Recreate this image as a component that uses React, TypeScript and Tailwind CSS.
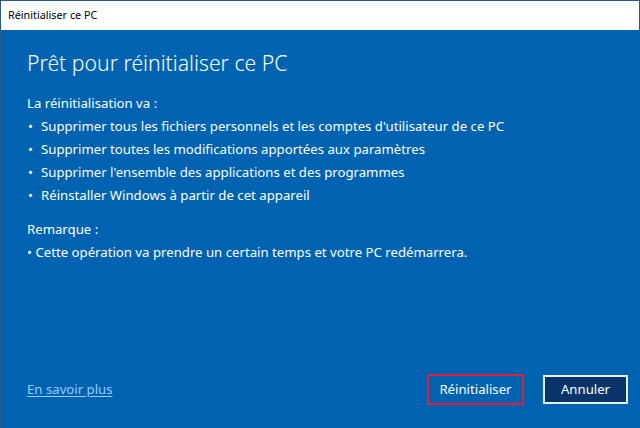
export default function App() {
  const items = [
    "Supprimer tous les fichiers personnels et les comptes d'utilisateur de ce PC",
    'Supprimer toutes les modifications apportées aux paramètres',
    "Supprimer l'ensemble des applications et des programmes",
    'Réinstaller Windows à partir de cet appareil',
  ]

  return (
    <div
      className="w-[640px] h-[428px] flex flex-col border-x border-t border-[#2a5a8c] overflow-hidden"
      style={{ fontFamily: '"Noto Sans", "Open Sans", sans-serif' }}
    >
      {/* Title bar */}
      <div className="h-[29px] bg-white flex items-center px-[7px] text-[10.8px] text-black">
        Réinitialiser ce PC
      </div>

      {/* Content */}
      <div className="flex-1 bg-[#0063b1] text-white flex flex-col px-[26px]">
        <h1 className="mt-[17px] text-[21.2px] leading-[32px] font-light">
          Prêt pour réinitialiser ce PC
        </h1>

        <div className="mt-[13px] text-[13.2px] leading-[23px]">
          <p>La réinitialisation va :</p>
          <ul>
            {items.map((item) => (
              <li key={item} className="flex">
                <span className="w-[14px] pl-[1px]">•</span>
                <span>{item}</span>
              </li>
            ))}
          </ul>
          <p className="mt-[11px]">Remarque :</p>
          <p>• Cette opération va prendre un certain temps et votre PC redémarrera.</p>
        </div>

        {/* Footer */}
        <div className="mt-auto mb-[23px] flex items-center">
          <a href="#" className="text-[13.2px] text-[#99ccff] underline underline-offset-2">
            En savoir plus
          </a>
          <div className="ml-auto flex items-center gap-[19px] mr-[-15px]">
            <button className="w-[97px] h-[31px] border-2 border-[#e0203a] text-[13.2px] text-white bg-[#0063b1]">
              Réinitialiser
            </button>
            <button className="w-[85px] h-[29px] border-2 border-[#e6f2ff] bg-[#08346a] text-[13.2px] text-white">
              Annuler
            </button>
          </div>
        </div>
      </div>
    </div>
  )
}
